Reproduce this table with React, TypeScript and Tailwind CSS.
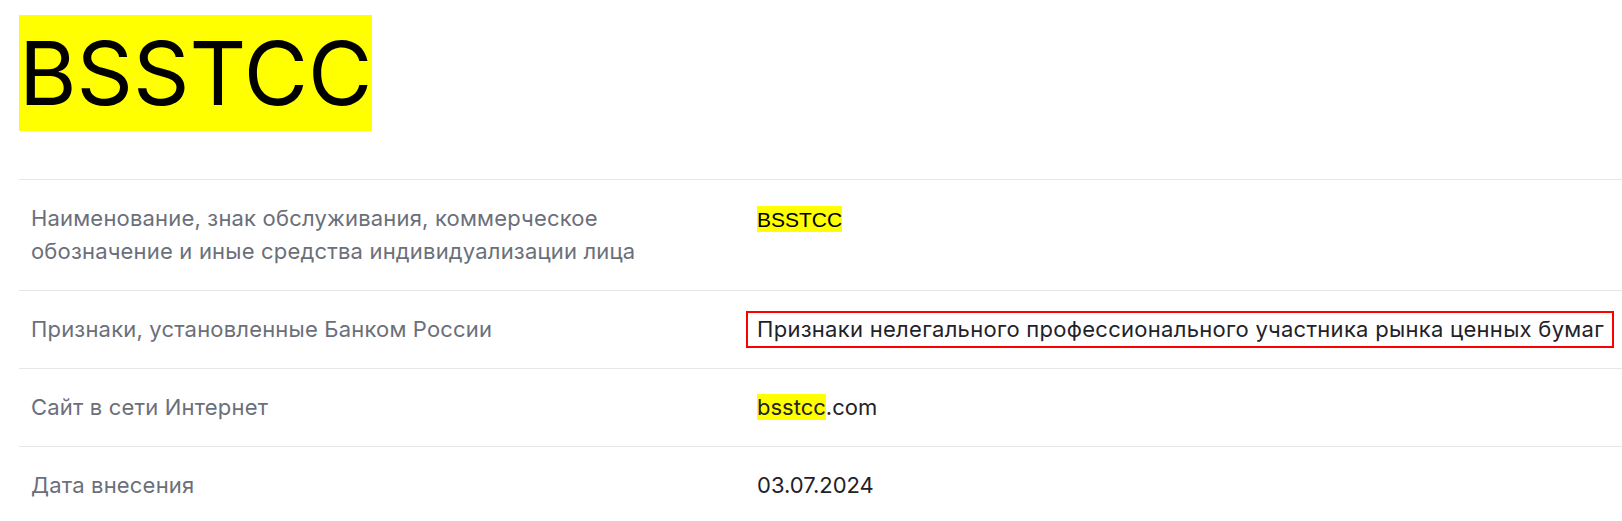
import React from 'react';

interface Row {
  label: React.ReactNode;
  value: React.ReactNode;
}

const Mark: React.FC<{ children: React.ReactNode }> = ({ children }) => (
  <span className="bg-[#ffff00]">{children}</span>
);

export default function App() {
  const rows: Row[] = [
    {
      label: (
        <>
          Наименование, знак обслуживания, коммерческое
          <br />
          обозначение и иные средства индивидуализации лица
        </>
      ),
      // the name itself is set in Arial, not in the page font
      value: (
        <span className="bg-[#ffff00] py-[1.5px] font-['Liberation_Sans',Arial,sans-serif] text-[21px] text-black">
          BSSTCC
        </span>
      ),
    },
    {
      label: 'Признаки, установленные Банком России',
      value: (
        <div className="w-fit -my-[2px] -ml-[11px] border-2 border-[#ff0000] pl-[9px] pr-[8px] tracking-[0.28px]">
          Признаки нелегального профессионального участника рынка ценных бумаг
        </div>
      ),
    },
    {
      label: 'Сайт в сети Интернет',
      value: (
        <>
          <Mark>bsstcc</Mark>.com
        </>
      ),
    },
    {
      label: 'Дата внесения',
      value: '03.07.2024',
    },
  ];

  return (
    <div className="min-h-screen bg-white pl-[19px] font-['Inter',sans-serif]">
      {/* Title */}
      <div className="pt-[15px]">
        <h1 className="inline-block bg-[#ffff00] text-[88px] leading-[116px] font-normal text-black">
          BSSTCC
        </h1>
      </div>

      {/* Details table */}
      <div className="mt-[48px]">
        {rows.map((row, idx) => (
          <div
            key={idx}
            className="flex border-t border-[#e6e6e6] py-[22px] pl-[12px] text-[22px] leading-[33px]"
          >
            <div className="w-[726px] shrink-0 tracking-[0.18px] text-[#6b6f7a]">{row.label}</div>
            <div className="text-[#1f2229]">{row.value}</div>
          </div>
        ))}
      </div>
    </div>
  );
}
